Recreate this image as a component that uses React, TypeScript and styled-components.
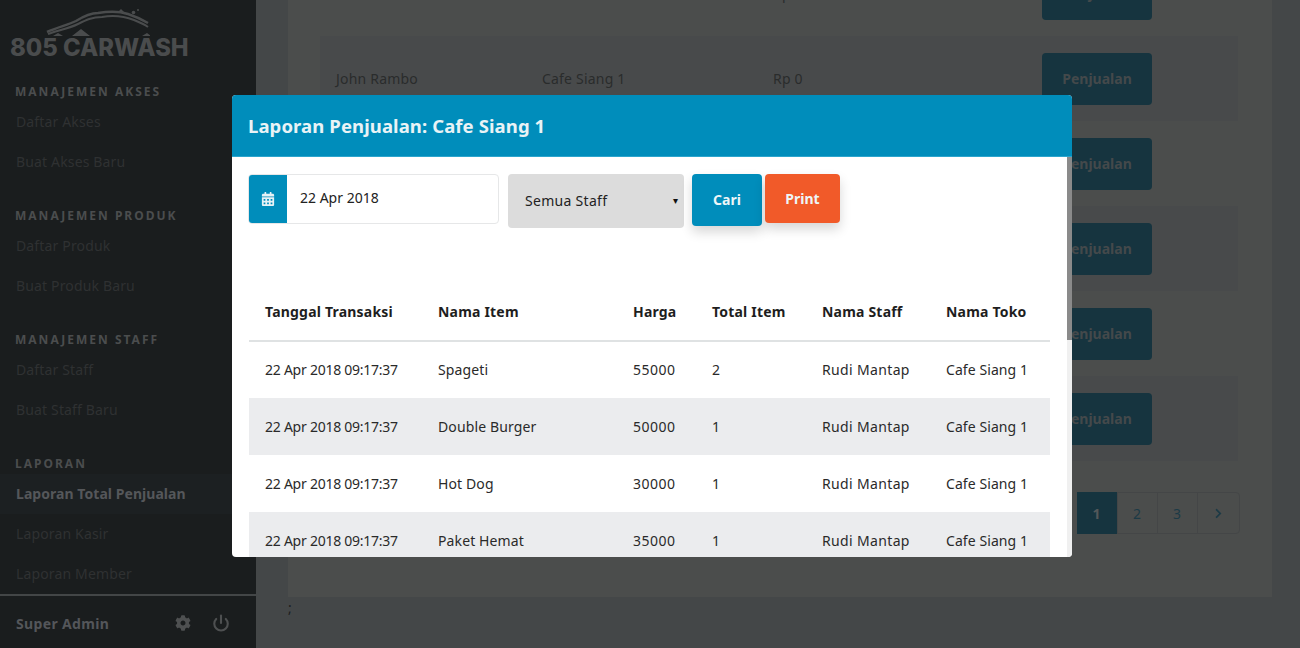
import React from "react";
import styled, { createGlobalStyle } from "styled-components";
import { FaCalendarAlt, FaChevronRight, FaCog } from "react-icons/fa";
import { Power } from "lucide-react";

const FONT = `"Noto Sans", "Open Sans", Arial, sans-serif`;

const Global = createGlobalStyle`
  html, body { margin: 0; padding: 0; height: 648px; overflow: hidden; background: #444748; }
  body { font-family: ${FONT}; }
  * { box-sizing: border-box; }
`;

const Page = styled.div`
  display: flex;
  width: 1300px;
  height: 648px;
  overflow: hidden;
  background: #444748;
`;

const Sidebar = styled.aside`
  width: 256px;
  flex: none;
  height: 648px;
  background: #1a1d1e;
  display: flex;
  flex-direction: column;
`;

const Logo = styled.div`
  height: 58px;
  position: relative;
  padding: 36px 0 0 10px;
  font-family: Inter, ${FONT};
  font-weight: 800;
  font-size: 23.8px;
  line-height: 24px;
  color: #4a4c4d;
  white-space: nowrap;
`;

const LogoCar = styled.svg`
  position: absolute;
  left: 44px;
  top: 8px;
`;

const Group = styled.div`
  margin-top: 21px;
`;

const GroupLabel = styled.div`
  height: 23px;
  padding: 1px 0 0 15px;
  font-size: 12px;
  line-height: 23px;
  font-weight: 700;
  letter-spacing: 2px;
  color: #4b4d4e;
`;

const NavItem = styled.div<{ $active?: boolean }>`
  height: 40px;
  padding-left: 16px;
  font-size: 14px;
  line-height: 40px;
  letter-spacing: ${(p) => (p.$active ? "0.05px" : "0.15px")};
  font-weight: ${(p) => (p.$active ? 700 : 400)};
  color: ${(p) => (p.$active ? "#55575a" : "#2f3132")};
  background: ${(p) => (p.$active ? "#1c2022" : "transparent")};
`;

const SideFooter = styled.div`
  margin-top: auto;
  height: 54px;
  border-top: 2px solid #434647;
  display: flex;
  align-items: center;
  padding: 2px 26px 0 16px;
  color: #54565a;
`;

const FooterName = styled.div`
  font-size: 14px;
  font-weight: 700;
  letter-spacing: 0.35px;
  flex: 1;
`;

const FooterIcons = styled.div`
  display: flex;
  align-items: center;
  gap: 21px;
  color: #4e5051;
`;

const Main = styled.main`
  flex: 1;
  padding: 0 28px 0 32px;
  display: flex;
  flex-direction: column;
  height: 648px;
  overflow: hidden;
`;

const Panel = styled.section`
  flex: none;
  height: 646px;
  margin-top: -49px;
  background: #4b4d4c;
  padding: 0 32px;
  display: flex;
  flex-direction: column;
`;

const BgRow = styled.div<{ $alt?: boolean }>`
  flex: none;
  width: 918px;
  height: 85px;
  display: flex;
  align-items: center;
  padding-left: 16px;
  background: ${(p) => (p.$alt ? "#484a4b" : "transparent")};
  color: #2a2c2c;
  font-size: 14px;
`;

const BgCell = styled.div<{ $w: number }>`
  width: ${(p) => p.$w}px;
  flex: none;
  letter-spacing: 0.2px;
`;

const BgButton = styled.div`
  width: 110px;
  height: 52px;
  border-radius: 4px;
  background: #16343f;
  color: #44494b;
  font-size: 14px;
  font-weight: 700;
  display: flex;
  align-items: center;
  justify-content: center;
`;

const Pager = styled.div`
  display: flex;
  align-self: flex-end;
  margin-top: 31px;
  height: 42px;
  border: 1px solid #444647;
  border-radius: 4px;
`;

const PageCell = styled.div<{ $active?: boolean; $w?: number }>`
  width: ${(p) => p.$w ?? 40}px;
  padding-right: 1px;
  display: flex;
  align-items: center;
  justify-content: center;
  font-size: 14px;
  font-weight: ${(p) => (p.$active ? 700 : 400)};
  color: ${(p) => (p.$active ? "#53585a" : "#1c3a46")};
  background: ${(p) => (p.$active ? "#16343f" : "transparent")};
  margin: ${(p) => (p.$active ? "-1px 0 -1px -1px" : "0")};
  & + & { border-left: 1px solid #444647; }
`;

const Semi = styled.div`
  margin-top: 1px;
  font-size: 14px;
  color: #1c1e1e;
  line-height: 20px;
`;

const Modal = styled.div`
  position: fixed;
  left: 232px;
  top: 95px;
  width: 840px;
  height: 462px;
  border-radius: 4px;
  overflow: hidden;
  background: #fff;
  display: flex;
  flex-direction: column;
`;

const ModalHeader = styled.header`
  flex: none;
  height: 62px;
  padding-left: 16px;
  background: #008dbb;
  border-bottom: 1px solid #2ba5cd;
  color: #e9f3f6;
  font-size: 18.5px;
  letter-spacing: 0.1px;
  font-weight: 700;
  line-height: 62px;
`;

const ModalBody = styled.div`
  flex: 1;
  position: relative;
  overflow: hidden;
`;

const ScrollTrack = styled.div`
  position: absolute;
  top: 0;
  right: 0;
  bottom: 0;
  width: 5px;
  background: #f0f0f0;
`;

const ScrollThumb = styled.div`
  height: 183px;
  background: #8a8a8a;
`;

const ModalContent = styled.div`
  padding: 17px 0 0 16px;
`;

const Form = styled.div`
  display: flex;
  align-items: flex-start;
  height: 109px;
`;

const InputGroup = styled.div`
  display: flex;
  width: 251px;
  height: 50px;
  border-radius: 4px;
  border: 1px solid #e6e7e8;
  overflow: hidden;
`;

const Addon = styled.div`
  width: 39px;
  margin: -1px 0 -1px -1px;
  flex: none;
  background: #008dbb;
  color: #e6f2f6;
  display: flex;
  align-items: center;
  justify-content: center;
`;

const DateValue = styled.div`
  padding-left: 13px;
  font-size: 14px;
  line-height: 45px;
  color: #222;
`;

const SelectBox = styled.div`
  margin-left: 9px;
  width: 176px;
  height: 54px;
  border-radius: 4px;
  background: #dcdcdc;
  display: flex;
  align-items: center;
  padding: 0 6px 2px 17px;
  font-size: 14px;
  color: #222;
  letter-spacing: 0.3px;
`;

const Arrow = styled.span`
  margin-left: auto;
  font-size: 10px;
  color: #111;
`;

const ActionButton = styled.div<{ $bg: string; $w: number; $h: number; $ml: number; $pb: number }>`
  width: ${(p) => p.$w}px;
  height: ${(p) => p.$h}px;
  margin-left: ${(p) => p.$ml}px;
  padding-bottom: ${(p) => p.$pb}px;
  background: ${(p) => p.$bg};
  border-radius: 4px;
  color: #eef6f8;
  font-size: 14px;
  font-weight: 700;
  display: flex;
  align-items: center;
  justify-content: center;
  box-shadow: 0 6px 12px rgba(0, 0, 0, 0.16);
`;

const Table = styled.table`
  width: 801px;
  margin-left: 1px;
  border-collapse: collapse;
  table-layout: fixed;
  font-size: 14px;
  color: #2a2a2a;
`;

const Th = styled.th<{ $w: number }>`
  width: ${(p) => p.$w}px;
  height: 58px;
  padding: 0 0 0 16px;
  text-align: left;
  font-size: 14px;
  letter-spacing: 0.2px;
  font-weight: 700;
  color: #1e1e1e;
  border-bottom: 2px solid #dfe2e3;
  white-space: nowrap;
`;

const Tr = styled.tr<{ $alt?: boolean }>`
  background: ${(p) => (p.$alt ? "#ebecee" : "#fff")};
`;

const Td = styled.td<{ $ls?: number }>`
  height: 57px;
  padding: 0 0 1px 16px;
  white-space: nowrap;
  letter-spacing: ${(p) => p.$ls ?? 0}px;
`;

const bgRows = [
  ["", "", "Rp 0"],
  ["John Rambo", "Cafe Siang 1", "Rp 0"],
  ["", "", ""],
  ["", "", ""],
  ["", "", ""],
  ["", "", ""],
];

const items = [
  ["Spageti", "55000", "2"],
  ["Double Burger", "50000", "1"],
  ["Hot Dog", "30000", "1"],
  ["Paket Hemat", "35000", "1"],
];

const groups = [
  { label: "MANAJEMEN AKSES", items: ["Daftar Akses", "Buat Akses Baru"] },
  { label: "MANAJEMEN PRODUK", items: ["Daftar Produk", "Buat Produk Baru"] },
  { label: "MANAJEMEN STAFF", items: ["Daftar Staff", "Buat Staff Baru"] },
  { label: "LAPORAN", items: ["Laporan Total Penjualan", "Laporan Kasir", "Laporan Member"] },
];

export default function App() {
  return (
    <Page>
      <Global />
      <Sidebar>
        <Logo>
          <LogoCar width="106" height="30" viewBox="0 0 106 30" fill="none">
            <g stroke="#4a4c4d">
              <path strokeWidth="2.5" d="M3 24 C14 19 24 17 32 13 C40 8 46 5 54 5 C66 3 78 4 84 6 C90 8 97 11 104 15" />
              <path strokeWidth="2" d="M4 26 C16 22 26 20 34 16 C42 12 48 9 58 9 C70 7 82 9 90 12 C95 14 100 16 104 19" />
            </g>
            <path d="M28 28 L37 21 L46 28 Z M9 28 L14 25 L19 28 Z M98 28 L103 25 L107 28 Z M74 4 L77 1 L81 5 Z" fill="#4a4c4d" />
            <circle cx="89.500" cy="4.500" r="1.800" fill="#4a4c4d" />
            <circle cx="94" cy="2" r="1" fill="#4a4c4d" />
          </LogoCar>
          805 CARWASH
        </Logo>
        {groups.map((g) => (
          <Group key={g.label}>
            <GroupLabel>{g.label}</GroupLabel>
            {g.items.map((i) => (
              <NavItem key={i} $active={i === "Laporan Total Penjualan"}>{i}</NavItem>
            ))}
          </Group>
        ))}
        <SideFooter>
          <FooterName>Super Admin</FooterName>
          <FooterIcons>
            <FaCog size={16} />
            <Power size={18} strokeWidth={2.8} />
          </FooterIcons>
        </SideFooter>
      </Sidebar>
      <Main>
        <Panel>
          {bgRows.map((r, i) => (
            <BgRow key={i} $alt={i % 2 === 1}>
              <BgCell $w={206}>{r[0]}</BgCell>
              <BgCell $w={231}>{r[1]}</BgCell>
              <BgCell $w={269}>{r[2]}</BgCell>
              <BgButton>Penjualan</BgButton>
            </BgRow>
          ))}
          <Pager>
            <PageCell $active>1</PageCell>
            <PageCell>2</PageCell>
            <PageCell>3</PageCell>
            <PageCell $w={42}><FaChevronRight size={11} /></PageCell>
          </Pager>
        </Panel>
        <Semi>;</Semi>
      </Main>
      <Modal>
        <ModalHeader>Laporan Penjualan: Cafe Siang 1</ModalHeader>
        <ModalBody>
          <ModalContent>
            <Form>
              <InputGroup>
                <Addon><FaCalendarAlt size={14} /></Addon>
                <DateValue>22 Apr 2018</DateValue>
              </InputGroup>
              <SelectBox>Semua Staff<Arrow>▾</Arrow></SelectBox>
              <ActionButton $bg="#008dbb" $w={70} $h={52} $ml={8} $pb={2}>Cari</ActionButton>
              <ActionButton $bg="#f15a29" $w={75} $h={49} $ml={3} $pb={0}>Print</ActionButton>
            </Form>
            <Table>
              <thead>
                <tr>
                  <Th $w={173}>Tanggal Transaksi</Th>
                  <Th $w={195}>Nama Item</Th>
                  <Th $w={79}>Harga</Th>
                  <Th $w={110}>Total Item</Th>
                  <Th $w={124}>Nama Staff</Th>
                  <Th $w={120}>Nama Toko</Th>
                </tr>
              </thead>
              <tbody>
                {items.map((it, i) => (
                  <Tr key={it[0]} $alt={i % 2 === 1}>
                    <Td $ls={-0.25}>22 Apr 2018 09:17:37</Td>
                    <Td $ls={0.12}>{it[0]}</Td>
                    <Td $ls={0.5}>{it[1]}</Td>
                    <Td>{it[2]}</Td>
                    <Td $ls={0.35}>Rudi Mantap</Td>
                    <Td $ls={0.08}>Cafe Siang 1</Td>
                  </Tr>
                ))}
              </tbody>
            </Table>
          </ModalContent>
          <ScrollTrack><ScrollThumb /></ScrollTrack>
        </ModalBody>
      </Modal>
    </Page>
  );
}
